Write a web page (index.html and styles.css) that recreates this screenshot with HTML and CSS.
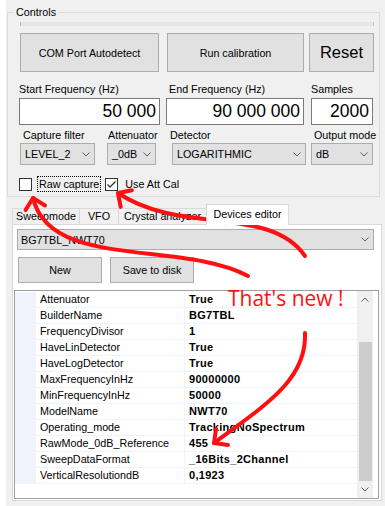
FILE: index.html
```html
<!DOCTYPE html>
<html lang="en">
  <head>
    <meta charset="UTF-8" />
    <meta name="viewport" content="width=device-width, initial-scale=1.0" />
    <title>Controls</title>
    <link rel="stylesheet" href="styles.css">
  </head>
  <body>
    <fieldset class="controls">
      <legend>Controls</legend>
      <div class="controls-body">
        <div class="progress"></div>
        <div class="button-row">
          <button class="btn btn-com">COM Port Autodetect</button>
          <button class="btn btn-cal">Run calibration</button>
          <button class="btn btn-reset">Reset</button>
        </div>
        <div class="field-row">
          <div class="field field-start">
            <span class="field-label">Start Frequency (Hz)</span>
            <div class="textbox">50 000</div>
          </div>
          <div class="field field-end">
            <span class="field-label">End Frequency (Hz)</span>
            <div class="textbox">90 000 000</div>
          </div>
          <div class="field field-samples">
            <span class="field-label">Samples</span>
            <div class="textbox">2000</div>
          </div>
        </div>
        <div class="combo-row">
          <div class="field field-filter">
            <span class="field-label">Capture filter</span>
            <div class="combo"><span>LEVEL_2</span><svg class="chevron" width="8" height="5"><polyline points="0.5,0.5 4,4 7.5,0.5" /></svg></div>
          </div>
          <div class="field field-att">
            <span class="field-label">Attenuator</span>
            <div class="combo"><span>_0dB</span><svg class="chevron" width="8" height="5"><polyline points="0.5,0.5 4,4 7.5,0.5" /></svg></div>
          </div>
          <div class="field field-detector">
            <span class="field-label">Detector</span>
            <div class="combo"><span>LOGARITHMIC</span><svg class="chevron" width="8" height="5"><polyline points="0.5,0.5 4,4 7.5,0.5" /></svg></div>
          </div>
          <div class="field field-output">
            <span class="field-label">Output mode</span>
            <div class="combo"><span>dB</span><svg class="chevron" width="8" height="5"><polyline points="0.5,0.5 4,4 7.5,0.5" /></svg></div>
          </div>
        </div>
        <div class="check-row">
          <span class="checkbox"></span>
          <span class="check-label focused">Raw capture</span>
          <span class="checkbox checkbox-att"><svg width="11" height="11"><polyline points="1.5,5.5 4,8 9.5,2.5" /></svg></span>
          <span class="check-label check-att">Use Att Cal</span>
        </div>
      </div>
    </fieldset>

    <div class="tabs">
      <div class="tab tab-sweep">Sweepmode</div>
      <div class="tab tab-vfo">VFO</div>
      <div class="tab tab-crystal">Crystal analyzer</div>
      <div class="tab tab-devices active">Devices editor</div>
    </div>
    <div class="tab-page">
      <div class="combo device-combo"><span>BG7TBL_NWT70</span><svg class="chevron" width="8" height="5"><polyline points="0.5,0.5 4,4 7.5,0.5" /></svg></div>
      <div class="page-buttons">
        <button class="btn btn-small">New</button>
        <button class="btn btn-small">Save to disk</button>
      </div>
      <div class="propgrid">
        <div class="rows">
          <div class="row"><span class="gutter"></span><span class="name">Attenuator</span><span class="value">True</span></div>
          <div class="row"><span class="gutter"></span><span class="name">BuilderName</span><span class="value">BG7TBL</span></div>
          <div class="row"><span class="gutter"></span><span class="name">FrequencyDivisor</span><span class="value">1</span></div>
          <div class="row"><span class="gutter"></span><span class="name">HaveLinDetector</span><span class="value">True</span></div>
          <div class="row"><span class="gutter"></span><span class="name">HaveLogDetector</span><span class="value">True</span></div>
          <div class="row"><span class="gutter"></span><span class="name">MaxFrequencyInHz</span><span class="value">90000000</span></div>
          <div class="row"><span class="gutter"></span><span class="name">MinFrequencyInHz</span><span class="value">50000</span></div>
          <div class="row"><span class="gutter"></span><span class="name">ModelName</span><span class="value">NWT70</span></div>
          <div class="row"><span class="gutter"></span><span class="name">Operating_mode</span><span class="value">TrackingNoSpectrum</span></div>
          <div class="row"><span class="gutter"></span><span class="name">RawMode_0dB_Reference</span><span class="value">455</span></div>
          <div class="row"><span class="gutter"></span><span class="name">SweepDataFormat</span><span class="value">_16Bits_2Channel</span></div>
          <div class="row"><span class="gutter"></span><span class="name">VerticalResolutiondB</span><span class="value">0,1923</span></div>
        </div>
        <div class="scrollbar">
          <div class="sb-arrow"><svg class="chevron" width="8" height="5"><polyline points="0.5,4.5 4,1 7.5,4.5" /></svg></div>
          <div class="sb-track"><div class="sb-thumb"></div></div>
          <div class="sb-arrow"><svg class="chevron" width="8" height="5"><polyline points="0.5,0.5 4,4 7.5,0.5" /></svg></div>
        </div>
      </div>
    </div>

    <!-- red hand-drawn notes over the form -->
    <svg class="annotations" width="385" height="506" viewBox="0 0 385 506">
      <defs>
        <marker id="head" viewBox="0 0 16 20" refX="13" refY="10" markerWidth="16" markerHeight="20" markerUnits="userSpaceOnUse" orient="auto" overflow="visible">
          <path d="M3,0 L13,10 L3,20" />
        </marker>
      </defs>
      <path class="arrow" d="M248,276 C180,240 50,270 33,198" />
      <path class="arrow" d="M305,256 C270,205 180,235 118,193" />
      <path class="arrow" d="M305,333 C307,380 265,405 214,443" />
      <text class="note" x="228" y="306">That's new !</text>
    </svg>
  </body>
</html>
```

FILE: styles.css
```css
html {
  background-color: #f0f0f0;
}
body {
  margin: 0;
  padding-top: 5px;
  border-left: 6px solid #fff;
  min-height: 506px;
  box-sizing: border-box;
  background-color: #f0f0f0;
  font-family: "Liberation Sans", Arial, sans-serif;
  font-size: 10.75px;
  color: #000;
  overflow: hidden;
}

/* group box */
.controls {
  margin: 0 5px 0 1px;
  padding: 0 5px 4px 6px;
  border: 1px solid #dcdcdc;
  min-width: 0;
}
.controls legend {
  padding: 0 2px;
  line-height: 14px;
}
.controls-body {
  padding-left: 6px;
}
.progress {
  margin-top: 3px;
  height: 4px;
  box-sizing: border-box;
  background-color: #e6e6e6;
  border-left: 1px solid #bcbcbc;
  border-right: 1px solid #bcbcbc;
}

.btn {
  box-sizing: border-box;
  display: flex;
  align-items: center;
  justify-content: center;
  padding: 0;
  border: 1px solid #adadad;
  background-color: #e1e1e1;
  font: inherit;
  color: #000;
}
.button-row {
  display: flex;
  margin-top: 7px;
}
.btn-com {
  width: 139px;
  height: 39px;
}
.btn-cal {
  width: 137px;
  height: 39px;
  margin-left: 8px;
}
.btn-reset {
  width: 65px;
  height: 39px;
  margin-left: 5px;
  font-size: 16.5px;
}

.field {
  display: flex;
  flex-direction: column;
}
.field-label {
  line-height: 13px;
  white-space: nowrap;
}
.field-row {
  display: flex;
  margin-top: 11px;
  margin-left: -1px;
}
.field-row .field-label {
  margin-bottom: 2px;
}
.field-start {
  width: 141px;
}
.field-end {
  width: 138px;
  margin-left: 6px;
}
.field-end .field-label {
  padding-left: 3px;
}
.field-samples {
  width: 62px;
  margin-left: 7px;
}
.textbox {
  height: 27px;
  box-sizing: border-box;
  border: 1px solid #7a7a7a;
  background-color: #fff;
  padding-right: 3px;
  text-align: right;
  font-size: 17.5px;
  line-height: 24px;
}

.combo-row {
  display: flex;
  margin-top: 4px;
}
.combo-row .field-label {
  margin-bottom: 1px;
}
.combo {
  height: 22px;
  box-sizing: border-box;
  display: flex;
  align-items: center;
  justify-content: space-between;
  padding: 0 4px 0 4px;
  border: 1px solid #adadad;
  background-color: #e1e1e1;
  white-space: nowrap;
}
.chevron polyline {
  fill: none;
  stroke: #606060;
  stroke-width: 1;
}
.field-filter {
  width: 75px;
}
.field-filter .field-label {
  padding-left: 3px;
}
.field-att {
  width: 49px;
  margin-left: 12px;
}
.field-att .field-label {
  padding-left: 1px;
}
.field-detector {
  width: 134px;
  margin-left: 16px;
}
.field-detector .field-label {
  margin-left: -2px;
}
.field-output {
  width: 62px;
  margin-left: 5px;
}
.field-output .field-label {
  padding-left: 3px;
}

.check-row {
  display: flex;
  align-items: center;
  height: 16px;
  margin-top: 11px;
  margin-left: -1px;
}
.checkbox {
  width: 13px;
  height: 13px;
  box-sizing: border-box;
  border: 1px solid #333;
  background-color: #fff;
}
.checkbox svg {
  display: block;
}
.checkbox polyline {
  fill: none;
  stroke: #333;
  stroke-width: 1.3;
}
.checkbox-att {
  margin-left: 4px;
}
.check-label {
  margin-left: 5px;
  padding: 0 1px;
  line-height: 14px;
  border: 1px solid transparent;
}
.check-label.focused {
  border: 1px dotted #000;
}
.check-att {
  margin-left: 5px;
}

/* tabs */
.tabs {
  display: flex;
  align-items: flex-end;
  height: 20px;
  margin: 7px 0 0 6px;
}
.tab {
  box-sizing: border-box;
  height: 16px;
  margin-left: -1px;
  border: 1px solid #d9d9d9;
  border-bottom: 0;
  background-color: #f0f0f0;
  text-align: center;
  line-height: 15px;
  white-space: nowrap;
}
.tab-sweep {
  width: 68px;
  margin-left: 0;
}
.tab-vfo {
  width: 40px;
}
.tab-crystal {
  width: 89px;
}
.tab-devices {
  width: 83px;
}
.tab.active {
  position: relative;
  z-index: 1;
  height: 21px;
  margin-bottom: -1px;
  background-color: #fff;
  line-height: 18px;
}
.tab-page {
  height: 277px;
  box-sizing: border-box;
  margin: 0 3px 0 6px;
  border: 1px solid #d9d9d9;
  background-color: #fff;
}
.device-combo {
  height: 21px;
  margin: 4px 7px 0 4px;
  padding-left: 3px;
}
.page-buttons {
  display: flex;
  margin: 7px 0 0 5px;
}
.btn-small {
  width: 84px;
  height: 26px;
  margin-right: 8px;
}

/* property grid */
.propgrid {
  display: flex;
  height: 209px;
  box-sizing: border-box;
  margin: 7px 2px 0 1px;
  padding-right: 5px;
  border: 1px solid #a0a0a0;
  background-color: #fff;
}
.rows {
  width: 342px;
  padding-top: 1px;
}
.row {
  display: flex;
  height: 16px;
  box-sizing: border-box;
  border-bottom: 1px solid #f0f3f9;
  line-height: 15px;
  white-space: nowrap;
}
.gutter {
  width: 21px;
  background-color: #f0f3f9;
}
.name {
  width: 149px;
  padding-left: 4px;
  box-sizing: border-box;
  border-right: 1px solid #f0f3f9;
}
.value {
  flex: 1;
  padding-left: 4px;
  font-weight: bold;
  font-size: 11px;
  letter-spacing: 0.3px;
}
.scrollbar {
  width: 16px;
  display: flex;
  flex-direction: column;
  background-color: #f0f0f0;
}
.sb-arrow {
  height: 17px;
  display: flex;
  align-items: center;
  justify-content: center;
}
.sb-track {
  flex: 1;
  display: flex;
  flex-direction: column;
}
.sb-thumb {
  height: 139px;
  margin: 34px 1px 0 2px;
  background-color: #cdcdcd;
}

/* annotations */
.annotations {
  position: absolute;
  top: 0;
  left: 0;
  pointer-events: none;
}
.arrow {
  fill: none;
  stroke: #ff1010;
  stroke-width: 4;
  stroke-linecap: round;
  marker-end: url(#head);
}
#head path {
  fill: none;
  stroke: #ff1010;
  stroke-width: 4;
  stroke-linecap: round;
  stroke-linejoin: round;
}
.note {
  fill: #ff1010;
  font-family: "Open Sans", sans-serif;
  font-size: 21px;
}
```
